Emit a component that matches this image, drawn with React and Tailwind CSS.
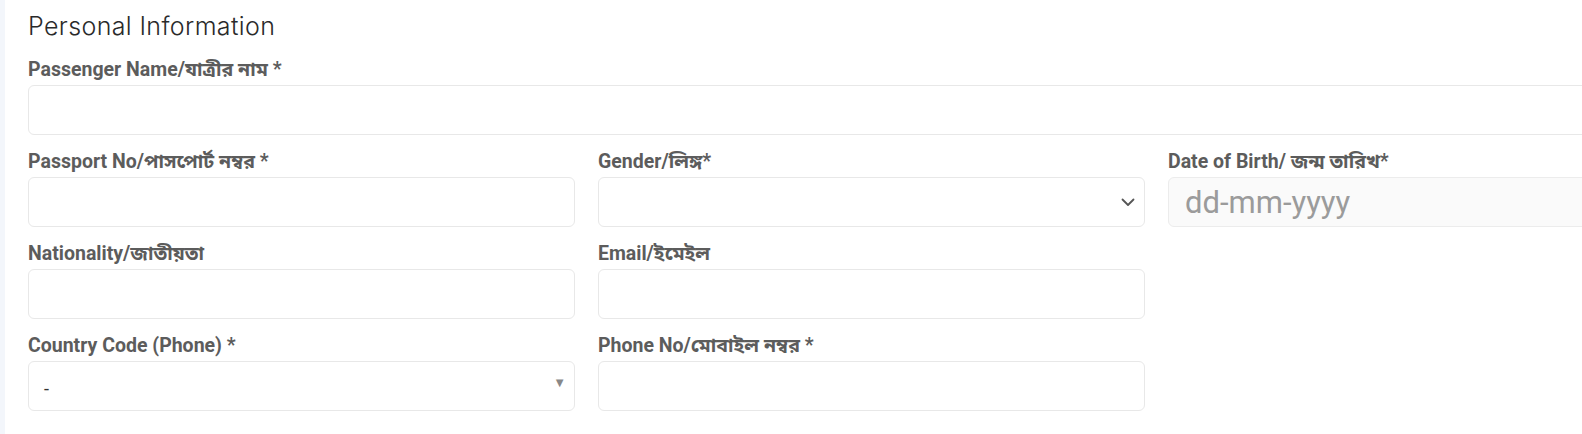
const labelCls =
  "block text-[19.5px] leading-5 font-bold text-[#5c5c5c] mb-[5px] whitespace-nowrap";
const inputCls =
  "w-full h-[50px] rounded-md border border-[#e8e8e8] bg-white px-3 text-[15px] outline-none";

function Field({ label, children }) {
  return (
    <div className="mb-[17px]">
      <label className={labelCls}>{label}</label>
      {children}
    </div>
  );
}

export default function App() {
  return (
    <div
      className="w-full overflow-hidden bg-white h-[434px]"
      style={{ fontFamily: "Roboto, 'Noto Sans Bengali', 'Noto Sans', sans-serif" }}
    >
      <div className="flex h-full">
        <div className="w-[5px] shrink-0 bg-[#f3f6fb]"></div>
        <div className="w-[1710px] shrink-0 pl-[23px]">
          <h2 className="font-['Inter',sans-serif] font-light text-[25px] leading-[28px] tracking-[0.015em] text-[#2a2a2a] pt-[12px] mb-[20px]">
            Personal Information
          </h2>

          <Field label="Passenger Name/যাত্রীর নাম *">
            <input type="text" className={inputCls} />
          </Field>

          <div className="grid grid-cols-3 gap-x-[23px]">
            <Field label="Passport No/পাসপোর্ট নম্বর *">
              <input type="text" className={inputCls} />
            </Field>
            <Field label="Gender/লিঙ্গ*">
              <div className={`${inputCls} flex items-center justify-end pr-[9px]`}>
                <svg width="14" height="9" viewBox="0 0 14 9" fill="none">
                  <polyline
                    points="1.5,1.5 7,7 12.5,1.5"
                    stroke="#555"
                    strokeWidth="1.8"
                    strokeLinecap="round"
                    strokeLinejoin="round"
                  />
                </svg>
              </div>
            </Field>
            <Field label="Date of Birth/ জন্ম তারিখ*">
              <input
                type="text"
                placeholder="dd-mm-yyyy"
                className="w-full h-[50px] rounded-md border border-[#ececec] bg-[#fafafa] px-4 text-[31px] outline-none placeholder:text-[#9b9b9b]"
              />
            </Field>

            <Field label="Nationality/জাতীয়তা">
              <input type="text" className={inputCls} />
            </Field>
            <Field label="Email/ইমেইল">
              <input type="text" className={inputCls} />
            </Field>
            <div></div>

            <Field label="Country Code (Phone) *">
              <div className={`${inputCls} flex items-center justify-between pl-[15px] pr-[8px]`}>
                <span className="text-[18px] text-[#333] mt-[4px]">-</span>
                <span className="text-[13px] text-[#888] -mt-[6px]">▼</span>
              </div>
            </Field>
            <Field label="Phone No/মোবাইল নম্বর *">
              <input type="text" className={inputCls} />
            </Field>
            <div></div>
          </div>
        </div>
      </div>
    </div>
  );
}
